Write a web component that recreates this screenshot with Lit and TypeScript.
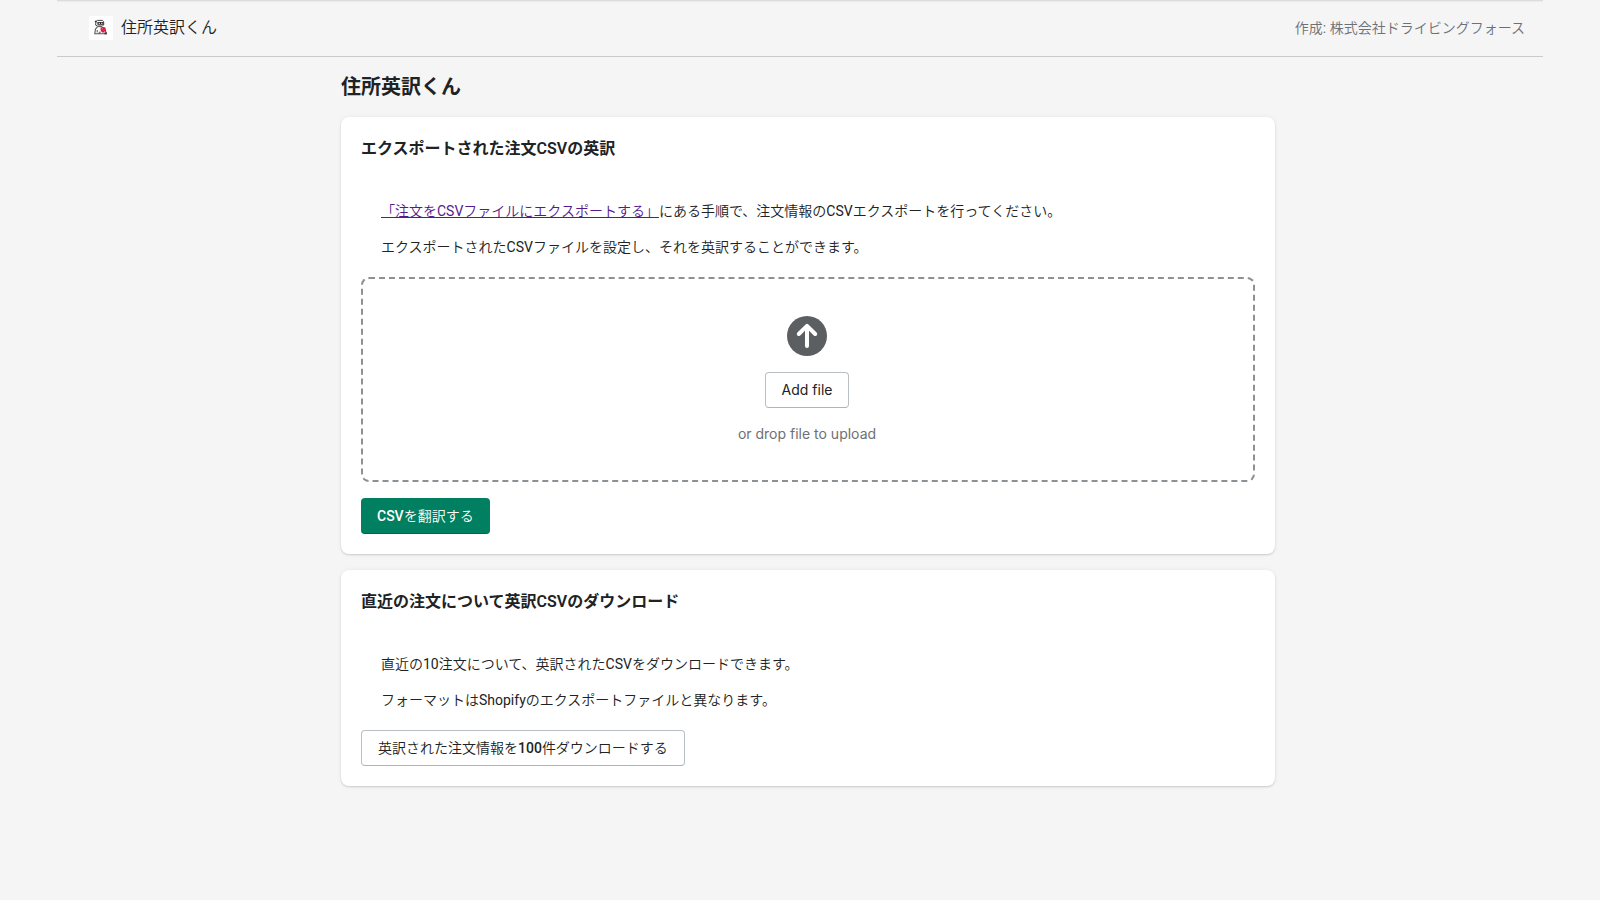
import { LitElement, html, css, svg } from "lit";
import { customElement } from "lit/decorators.js";

const logo = svg`<svg class="logo" viewBox="0 0 24 24" width="24" height="24" aria-hidden="true">
  <rect width="24" height="24" fill="#fff"/>
  <path d="M7 5.5 8.5 4.4h5l1.2 1.4v3.2l-1.4 1H8.4L6.6 9z" fill="#fff" stroke="#4a4646" stroke-width="1"/>
  <path d="M5.9 4.8h1.6v1.4H5.9zM8.4 6h6v2.8h-6z" fill="#2b2727"/>
  <path d="M9.6 6.8h1.4v1.2H9.6zM12 6.8h1.4v1.2H12z" fill="#c9c4c4"/>
  <path d="M8.4 10.8 6.4 13.2 5.8 17.8h11.4L16 12.6" fill="#fff" stroke="#5a5555" stroke-width="1.1"/>
  <path d="M8.4 10.6h4.4M8.2 14v2.4M10.2 17.8v-1.6h1.6" stroke="#5a5555" stroke-width="1" fill="none"/>
  <path d="M11.6 11.4 14 10.9l2.4.5v2.6c0 1.2-1.1 2.2-2.4 2.7-1.3-.5-2.4-1.5-2.4-2.7z" fill="#dc143c"/>
  <path d="m12.8 13.6 1-1.4M14.4 14.4l.8-.9" stroke="#f3a0b0" stroke-width=".7"/>
  <path d="M15.4 16.4h2.4v1.9h-2.4z" fill="#3b3737"/>
</svg>`;

const uploadIcon = svg`<svg class="upload" viewBox="0 0 20 20" width="40" height="40" aria-hidden="true">
  <circle cx="10" cy="10" r="10" fill="#5c5f62"/>
  <path d="M10 15V5.3M5.9 9 10 4.9 14.1 9" fill="none" stroke="#fff" stroke-width="2" stroke-linecap="round" stroke-linejoin="round"/>
</svg>`;

@customElement("app-root")
export class AppRoot extends LitElement {
  static styles = css`
    :host {
      display: block;
      box-sizing: border-box;
      min-height: 100vh;
      padding: 0 41px 0 57px;
      background: #f5f5f5;
      color: #202223;
      font-family: Roboto, "Noto Sans CJK JP DemiLight", "Noto Sans CJK JP Light", "Noto Sans CJK JP", sans-serif;
      font-size: 14px;
      line-height: 20px;
    }
    * {
      box-sizing: border-box;
    }
    h1, h2, p {
      margin: 0;
    }
    .topbar {
      display: flex;
      align-items: center;
      justify-content: space-between;
      height: 57px;
      margin-right: 16px;
      padding: 0 18px 2px 32px;
      border-top: 1px solid #dcdcdd;
      border-bottom: 1px solid #c9cacb;
      box-shadow: inset 0 1px 1px #ececec;
    }
    .brand {
      display: flex;
      align-items: center;
      gap: 8px;
      font-size: 16px;
      line-height: 24px;
    }
    .logo, .upload {
      display: block;
    }
    .author {
      color: #6d7175;
    }
    .page {
      max-width: 998px;
      margin: 0 auto;
      padding: 16px 32px;
    }
    h1 {
      font-size: 20px;
      line-height: 28px;
      font-weight: 600;
    }
    h1, h2 {
      font-family: Roboto, "Noto Sans CJK JP", sans-serif;
    }
    .card {
      margin-top: 16px;
      padding: 20px;
      border-radius: 8px;
      background: #fff;
      box-shadow: 0 0 5px rgba(23, 24, 24, 0.05), 0 1px 2px rgba(0, 0, 0, 0.15);
    }
    h2 {
      font-size: 16px;
      line-height: 24px;
      font-weight: 600;
    }
    .text {
      display: flex;
      flex-direction: column;
      gap: 16px;
      margin-top: 20px;
      padding: 20px;
    }
    a {
      color: #551a8b;
    }
    .drop {
      display: flex;
      flex-direction: column;
      align-items: center;
      gap: 16px;
      margin-bottom: 16px;
      padding: 37px 18px 36px 16px;
      border: 2px dashed #8c9196;
      border-radius: 8px;
      font-family: Inter, sans-serif;
    }
    .hint {
      color: #6d7175;
    }
    button {
      display: block;
      min-height: 36px;
      padding: 7px 16px;
      border: 1px solid #babfc3;
      border-bottom-color: #aeb4b8;
      border-radius: 4px;
      background: #fff;
      color: #202223;
      font: inherit;
      cursor: pointer;
    }
    .latin {
      font-weight: 500;
    }
    .primary {
      padding: 8px 16px;
      border: 0;
      background: #008060;
      box-shadow: inset 0 -1px 0 rgba(0, 0, 0, 0.2);
      color: #fff;
    }
  `;

  render() {
    return html`
      <header class="topbar">
        <div class="brand">${logo}<span>住所英訳くん</span></div>
        <div class="author">作成: 株式会社ドライビングフォース</div>
      </header>
      <main class="page">
        <h1>住所英訳くん</h1>
        <section class="card">
          <h2>エクスポートされた注文CSVの英訳</h2>
          <div class="text">
            <p><a href="#export">「注文をCSVファイルにエクスポートする」</a>にある手順で、注文情報のCSVエクスポートを行ってください。</p>
            <p>エクスポートされたCSVファイルを設定し、それを英訳することができます。</p>
          </div>
          <div class="drop">
            ${uploadIcon}
            <button type="button">Add file</button>
            <span class="hint">or drop file to upload</span>
          </div>
          <button type="button" class="primary"><span class="latin">CSV</span>を翻訳する</button>
        </section>
        <section class="card">
          <h2>直近の注文について英訳CSVのダウンロード</h2>
          <div class="text">
            <p>直近の10注文について、英訳されたCSVをダウンロードできます。</p>
            <p>フォーマットはShopifyのエクスポートファイルと異なります。</p>
          </div>
          <button type="button">英訳された注文情報を<span class="latin">100</span>件ダウンロードする</button>
        </section>
      </main>
    `;
  }
}
